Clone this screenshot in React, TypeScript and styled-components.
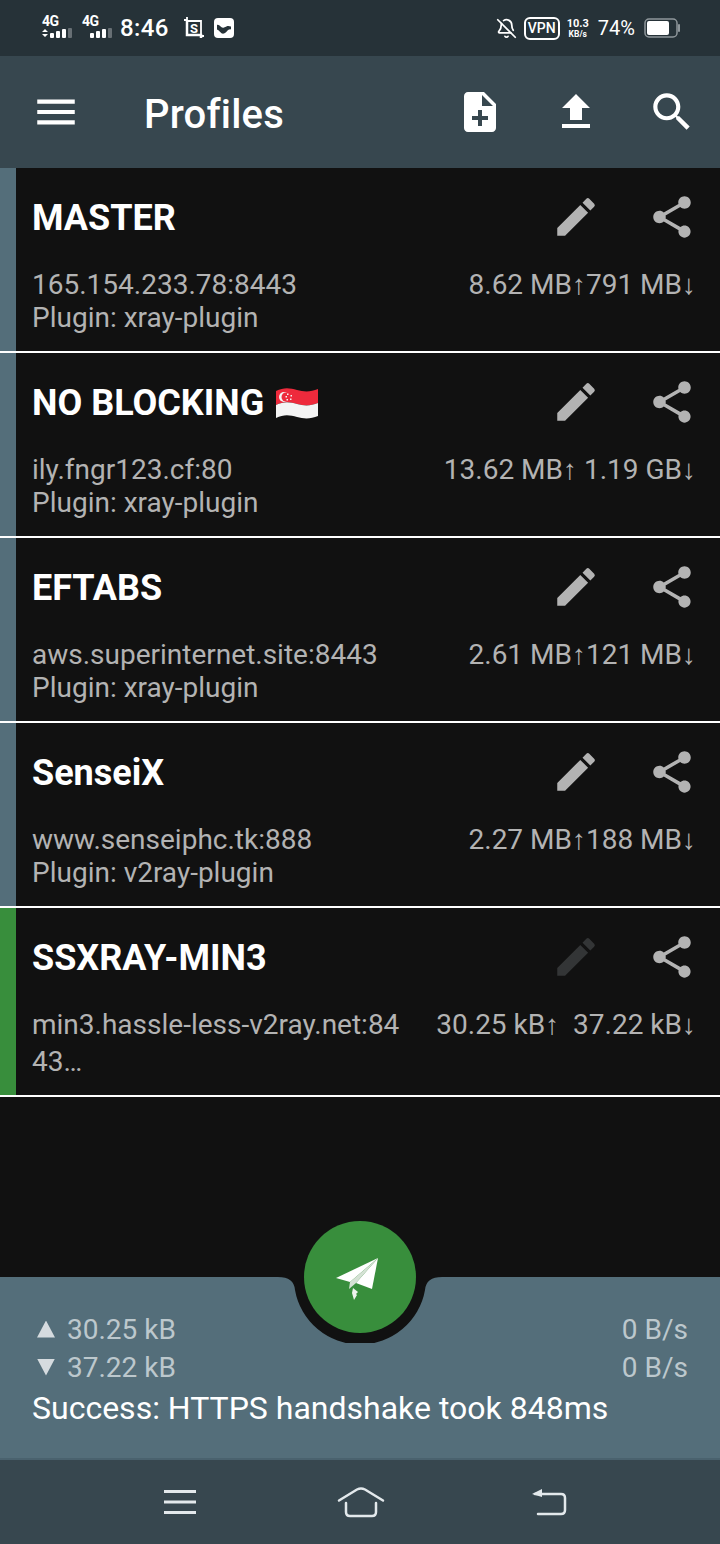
import React from 'react';
import styled, { createGlobalStyle } from 'styled-components';
import { BellOff } from 'lucide-react';

const GlobalStyle = createGlobalStyle`
  html, body {
    margin: 0;
    padding: 0;
    background: #111111;
  }
  * {
    box-sizing: border-box;
  }
`;

const Page = styled.div`
  width: 720px;
  height: 1544px;
  display: flex;
  flex-direction: column;
  overflow: hidden;
  background: #111111;
  font-family: Roboto, 'Liberation Sans', sans-serif;
`;

const StatusBar = styled.div`
  height: 56px;
  flex: none;
  display: flex;
  align-items: center;
  justify-content: space-between;
  padding: 0 40px 0 41px;
  background: #263238;
  color: #fff;
`;

const StatusGroup = styled.div`
  display: flex;
  align-items: center;
`;

const Signal = styled.div`
  width: 33px;
  height: 24px;
  margin-right: 7px;
  position: relative;
  flex: none;
`;

const SignalLabel = styled.span`
  position: absolute;
  left: 1px;
  top: -2px;
  font-size: 14px;
  line-height: 15px;
  font-weight: 700;
  letter-spacing: -0.5px;
`;

const SignalBars = styled.svg`
  position: absolute;
  left: 0;
  top: 0;
`;

const Clock = styled.span`
  font-size: 24px;
  font-weight: 500;
  letter-spacing: 0.4px;
  margin: 0 15px 0 -1px;
`;

const VpnBadge = styled.span`
  width: 36px;
  height: 23px;
  margin: 0 7px 0 7px;
  display: flex;
  align-items: center;
  justify-content: center;
  border: 2px solid #fff;
  border-radius: 6px;
  font-size: 14px;
  font-weight: 500;
`;

const Speed = styled.span`
  display: flex;
  flex-direction: column;
  align-items: center;
  font-weight: 700;
  font-size: 11px;
  line-height: 12px;
  margin-right: 9px;
  small {
    font-size: 8.5px;
    line-height: 9px;
  }
`;

const Battery = styled.span`
  font-size: 20px;
  margin-right: 9px;
`;

const Toolbar = styled.header`
  height: 112px;
  flex: none;
  display: flex;
  align-items: center;
  padding-left: 8px;
  background: #37474f;
  color: #fff;
`;

const Title = styled.h1`
  flex: 1;
  margin: 4px 0 0 40px;
  font-size: 40px;
  font-weight: 500;
  letter-spacing: 0.2px;
`;

const IconCell = styled.div`
  width: 96px;
  height: 72px;
  flex: none;
  display: flex;
  align-items: center;
  justify-content: center;
`;

const ProfileList = styled.main`
  flex: 1;
  min-height: 0;
`;

const Card = styled.section`
  display: flex;
  height: ${p => p.$height}px;
  background: #111111;
  border-bottom: 2px solid #fff;
`;

const SideBar = styled.div`
  width: 16px;
  flex: none;
  background: ${p => (p.$active ? '#388e3c' : '#546e7a')};
`;

const CardBody = styled.div`
  flex: 1;
  min-width: 0;
  padding-left: 16px;
`;

const CardHead = styled.div`
  height: 96px;
  padding-top: 1px;
  display: flex;
  align-items: center;
`;

const ProfileName = styled.h2`
  flex: 1;
  margin: 2px 0 0;
  display: flex;
  align-items: center;
  gap: 11px;
  color: #fff;
  font-size: 36px;
  font-weight: 700;
`;

const CardInfo = styled.div`
  display: flex;
  justify-content: space-between;
  padding-right: 24px;
  margin-top: 4px;
  color: #b3b3b3;
  font-size: 28px;
  line-height: 33px;
`;

const Address = styled.div`
  word-break: break-all;
  width: ${p => (p.$wrap ? '374px' : 'auto')};
  line-height: ${p => (p.$wrap ? '37px' : '33px')};
  margin-top: ${p => (p.$wrap ? '-2px' : '0')};
`;

const Stats = styled.div`
  white-space: pre;
`;

const BottomPanel = styled.footer`
  height: 183px;
  flex: none;
  position: relative;
  padding: 33px 32px 0;
  background: #546e7a;
  border-bottom: 2px solid #4a626e;
`;

const Notch = styled.svg`
  position: absolute;
  left: 278px;
  top: 0;
`;

const Fab = styled.button`
  position: absolute;
  left: 304px;
  top: -56px;
  width: 112px;
  height: 112px;
  padding: 0;
  border: 0;
  border-radius: 50%;
  background: #388e3c;
`;

const StatRow = styled.div`
  height: 38px;
  display: flex;
  align-items: center;
  justify-content: space-between;
  color: #cfd8dc;
  opacity: 0.85;
  font-size: 28px;
`;

const StatValue = styled.span`
  display: flex;
  align-items: center;
  gap: 12px;
`;

const Triangle = styled.span`
  width: 18px;
  height: 17px;
  margin-left: 5px;
  background: #eceff1;
  clip-path: ${p =>
    p.$down ? 'polygon(0 0, 100% 0, 50% 100%)' : 'polygon(50% 0, 100% 100%, 0 100%)'};
`;

const Message = styled.div`
  margin-top: 0;
  color: #fff;
  font-size: 32px;
  line-height: 44px;
`;

const NavBar = styled.nav`
  height: 84px;
  flex: none;
  display: grid;
  grid-template-columns: 120px 242px 134px;
  align-items: center;
  justify-items: center;
  padding-left: 120px;
  background: #37474f;
`;

const MdIcon = ({ d, size = 50, color = '#fff' }: { d: string; size?: number; color?: string }) => (
  <svg width={size} height={size} viewBox="0 0 24 24" fill={color}>
    <path d={d} />
  </svg>
);

const MENU = 'M3 18h18v-2H3v2zm0-5h18v-2H3v2zm0-7v2h18V6H3z';
const NOTE_ADD =
  'M14 2H6c-1.1 0-1.99.9-1.99 2L4 20c0 1.1.89 2 1.99 2H18c1.1 0 2-.9 2-2V8l-6-6zm2 14h-3v3h-2v-3H8v-2h3v-3h2v3h3v2zm-3-7V3.5L18.5 9H13z';
const UPLOAD = 'M9 16h6v-6h4l-7-7-7 7h4zm-4 2h14v2H5z';
const SEARCH =
  'M15.5 14h-.79l-.28-.27C15.41 12.59 16 11.11 16 9.5 16 5.91 13.09 3 9.5 3S3 5.91 3 9.5 5.91 16 9.5 16c1.61 0 3.09-.59 4.23-1.57l.27.28v.79l5 4.99L20.49 19l-4.99-5zm-6 0C7.01 14 5 11.99 5 9.5S7.01 5 9.5 5 14 7.01 14 9.5 11.99 14 9.5 14z';
const EDIT =
  'M3 17.25V21h3.75L17.81 9.94l-3.75-3.75L3 17.25zM20.71 7.04a.996.996 0 0 0 0-1.41l-2.34-2.34a.996.996 0 0 0-1.41 0l-1.83 1.83 3.75 3.75 1.83-1.83z';
const SHARE =
  'M18 16.08c-.76 0-1.44.3-1.96.77L8.91 12.7c.05-.23.09-.46.09-.7s-.04-.47-.09-.7l7.05-4.11c.54.5 1.25.81 2.04.81 1.66 0 3-1.34 3-3s-1.34-3-3-3-3 1.34-3 3c0 .24.04.47.09.7L8.04 9.81C7.5 9.31 6.79 9 6 9c-1.66 0-3 1.34-3 3s1.34 3 3 3c.79 0 1.5-.31 2.04-.81l7.12 4.16c-.05.21-.08.43-.08.65 0 1.61 1.31 2.92 2.92 2.92 1.61 0 2.92-1.31 2.92-2.92s-1.31-2.92-2.92-2.92z';

const SignalIcon = ({ arrows }: { arrows?: boolean }) => (
  <Signal>
    <SignalLabel>4G</SignalLabel>
    <SignalBars width="33" height="24" viewBox="0 0 33 24" fill="#fff">
      {arrows && <path d="M1 16l3-3 3 3zM1 18h6l-3 3z" />}
      <rect x="9" y="17" width="4" height="5" rx="1" />
      <rect x="15" y="15" width="4" height="7" rx="1" />
      <rect x="21" y="13" width="4" height="9" rx="1" />
      <rect x="27" y="12" width="4" height="10" rx="1" opacity="0.3" />
    </SignalBars>
  </Signal>
);

const ScreenshotIcon = () => (
  <svg width="20" height="22" viewBox="0 0 20 22" fill="none" stroke="#fff" style={{ marginRight: 10 }}>
    <path d="M0 3h3M3 0v4h14v15h3" strokeWidth="1.800" />
    <path d="M3 4v14h14v3" strokeWidth="2.500" />
    <text x="10" y="16" textAnchor="middle" fontSize="13" fontWeight="700" fill="#fff" stroke="none">
      S
    </text>
  </svg>
);

const MessageIcon = () => (
  <svg width="20" height="20" viewBox="0 0 20 20">
    <rect width="20" height="20" rx="4" fill="#fff" />
    <path d="M3 7c3-1 4 4 7 2.500s4-2 7-1v3c-3-1-4 3-7 4s-4-3-7-4z" fill="#263238" />
  </svg>
);

const BatteryIcon = () => (
  <svg width="36" height="20" viewBox="0 0 36 20">
    <rect x="1" y="1" width="32" height="18" rx="4" fill="none" stroke="#8f979b" strokeWidth="1.500" />
    <rect x="3" y="3" width="22" height="14" rx="2" fill="#fff" />
    <rect x="34" y="6" width="2" height="8" rx="1" fill="#8f979b" />
  </svg>
);

const SingaporeFlag = () => (
  <svg width="44" height="34" viewBox="0 0 44 34">
    <path d="M1 5c8-4 14-3 21-1s14 2 21-1v14c-7 3-14 3-21 1S9 15 1 19z" fill="#ee2a3c" />
    <path d="M1 19c8-4 14-3 21-1s14 2 21-1v13c-7 3-14 3-21 1S9 28 1 32z" fill="#f4f4f4" />
    <circle cx="9" cy="11" r="5" fill="#f4f4f4" />
    <circle cx="11" cy="11" r="4.500" fill="#ee2a3c" />
    <path d="M12 7.500h1.500v1.500H12zM15.500 9h1.500v1.500h-1.500zM15 12.500h1.500V14H15zM11.500 13h1.500v1.500h-1.500zM10.500 10h1.500v1.500h-1.500z" fill="#f4f4f4" />
  </svg>
);

const PlaneIcon = () => (
  <svg width="112" height="112" viewBox="0 0 112 112">
    <path d="M74 37L32 57l14 4z" fill="#fff" />
    <path d="M74 37L52 62l16 6z" fill="#fff" />
    <path d="M74 37L46 61l-1 7 7-6z" fill="#d5e2d5" />
    <path d="M49 67l5 4-2 2 1 1-3 5-2-7z" fill="#eef3ee" />
  </svg>
);

const NavMenuIcon = () => (
  <svg width="36" height="26" viewBox="0 0 36 26" stroke="#e3e9ec" strokeWidth="3">
    <path d="M2 2.500h32M2 13h32M2 23.500h32" />
  </svg>
);

const NavHomeIcon = () => (
  <svg width="50" height="32" viewBox="0 0 50 32" fill="none" stroke="#e3e9ec" strokeWidth="2.500" strokeLinecap="round" strokeLinejoin="round">
    <path d="M3 14.500L21 3.500q4-2 8 0L47 14.500" />
    <path d="M10 17v9q0 4 4 4h22q4 0 4-4V17" />
  </svg>
);

const NavBackIcon = () => (
  <svg width="36" height="28" viewBox="0 0 36 28" fill="none" stroke="#e3e9ec" strokeWidth="2.500" strokeLinecap="round">
    <path d="M4 6h26q4 0 4 4v12q0 4-4 4H7" />
    <path d="M1 6l10-5v8z" fill="#e3e9ec" stroke="none" />
  </svg>
);

const profiles = [
  { name: 'MASTER', address: '165.154.233.78:8443', plugin: 'Plugin: xray-plugin', stats: '8.62 MB↑791 MB↓' },
  { name: 'NO BLOCKING', flag: true, address: 'ily.fngr123.cf:80', plugin: 'Plugin: xray-plugin', stats: '13.62 MB↑ 1.19 GB↓' },
  { name: 'EFTABS', address: 'aws.superinternet.site:8443', plugin: 'Plugin: xray-plugin', stats: '2.61 MB↑121 MB↓' },
  { name: 'SenseiX', address: 'www.senseiphc.tk:888', plugin: 'Plugin: v2ray-plugin', stats: '2.27 MB↑188 MB↓' },
  { name: 'SSXRAY-MIN3', address: 'min3.hassle-less-v2ray.net:8443…', active: true, stats: '30.25 kB↑  37.22 kB↓' },
];

export default function App(): JSX.Element {
  return (
    <Page>
      <GlobalStyle />
      <StatusBar>
        <StatusGroup>
          <SignalIcon arrows />
          <SignalIcon />
          <Clock>8:46</Clock>
          <ScreenshotIcon />
          <MessageIcon />
        </StatusGroup>
        <StatusGroup>
          <BellOff size={21} strokeWidth={2} />
          <VpnBadge>VPN</VpnBadge>
          <Speed>
            10.3
            <small>KB/s</small>
          </Speed>
          <Battery>74%</Battery>
          <BatteryIcon />
        </StatusGroup>
      </StatusBar>

      <Toolbar>
        <IconCell>
          <MdIcon d={MENU} />
        </IconCell>
        <Title>Profiles</Title>
        <IconCell>
          <MdIcon d={NOTE_ADD} size={48} />
        </IconCell>
        <IconCell>
          <MdIcon d={UPLOAD} size={48} />
        </IconCell>
        <IconCell>
          <MdIcon d={SEARCH} />
        </IconCell>
      </Toolbar>

      <ProfileList>
        {profiles.map(p => (
          <Card key={p.name} $height={p.active ? 189 : 185}>
            <SideBar $active={p.active} />
            <CardBody>
              <CardHead>
                <ProfileName>
                  {p.name}
                  {p.flag && <SingaporeFlag />}
                </ProfileName>
                <IconCell>
                  <MdIcon d={EDIT} color={p.active ? '#333536' : '#b3b3b3'} />
                </IconCell>
                <IconCell>
                  <MdIcon d={SHARE} color="#b3b3b3" />
                </IconCell>
              </CardHead>
              <CardInfo>
                <div>
                  <Address $wrap={p.active}>{p.address}</Address>
                  {p.plugin && <div>{p.plugin}</div>}
                </div>
                <Stats>{p.stats}</Stats>
              </CardInfo>
            </CardBody>
          </Card>
        ))}
      </ProfileList>

      <BottomPanel>
        <Notch width="164" height="66" viewBox="-82 0 164 66">
          <path d="M-82 0Q-66 0-65 13A66 66 0 0 0 65 13Q66 0 82 0Z" fill="#111111" />
        </Notch>
        <Fab aria-label="Connect">
          <PlaneIcon />
        </Fab>
        <StatRow>
          <StatValue>
            <Triangle />
            30.25 kB
          </StatValue>
          <span>0 B/s</span>
        </StatRow>
        <StatRow>
          <StatValue>
            <Triangle $down />
            37.22 kB
          </StatValue>
          <span>0 B/s</span>
        </StatRow>
        <Message>Success: HTTPS handshake took 848ms</Message>
      </BottomPanel>

      <NavBar>
        <NavMenuIcon />
        <NavHomeIcon />
        <NavBackIcon />
      </NavBar>
    </Page>
  );
}
